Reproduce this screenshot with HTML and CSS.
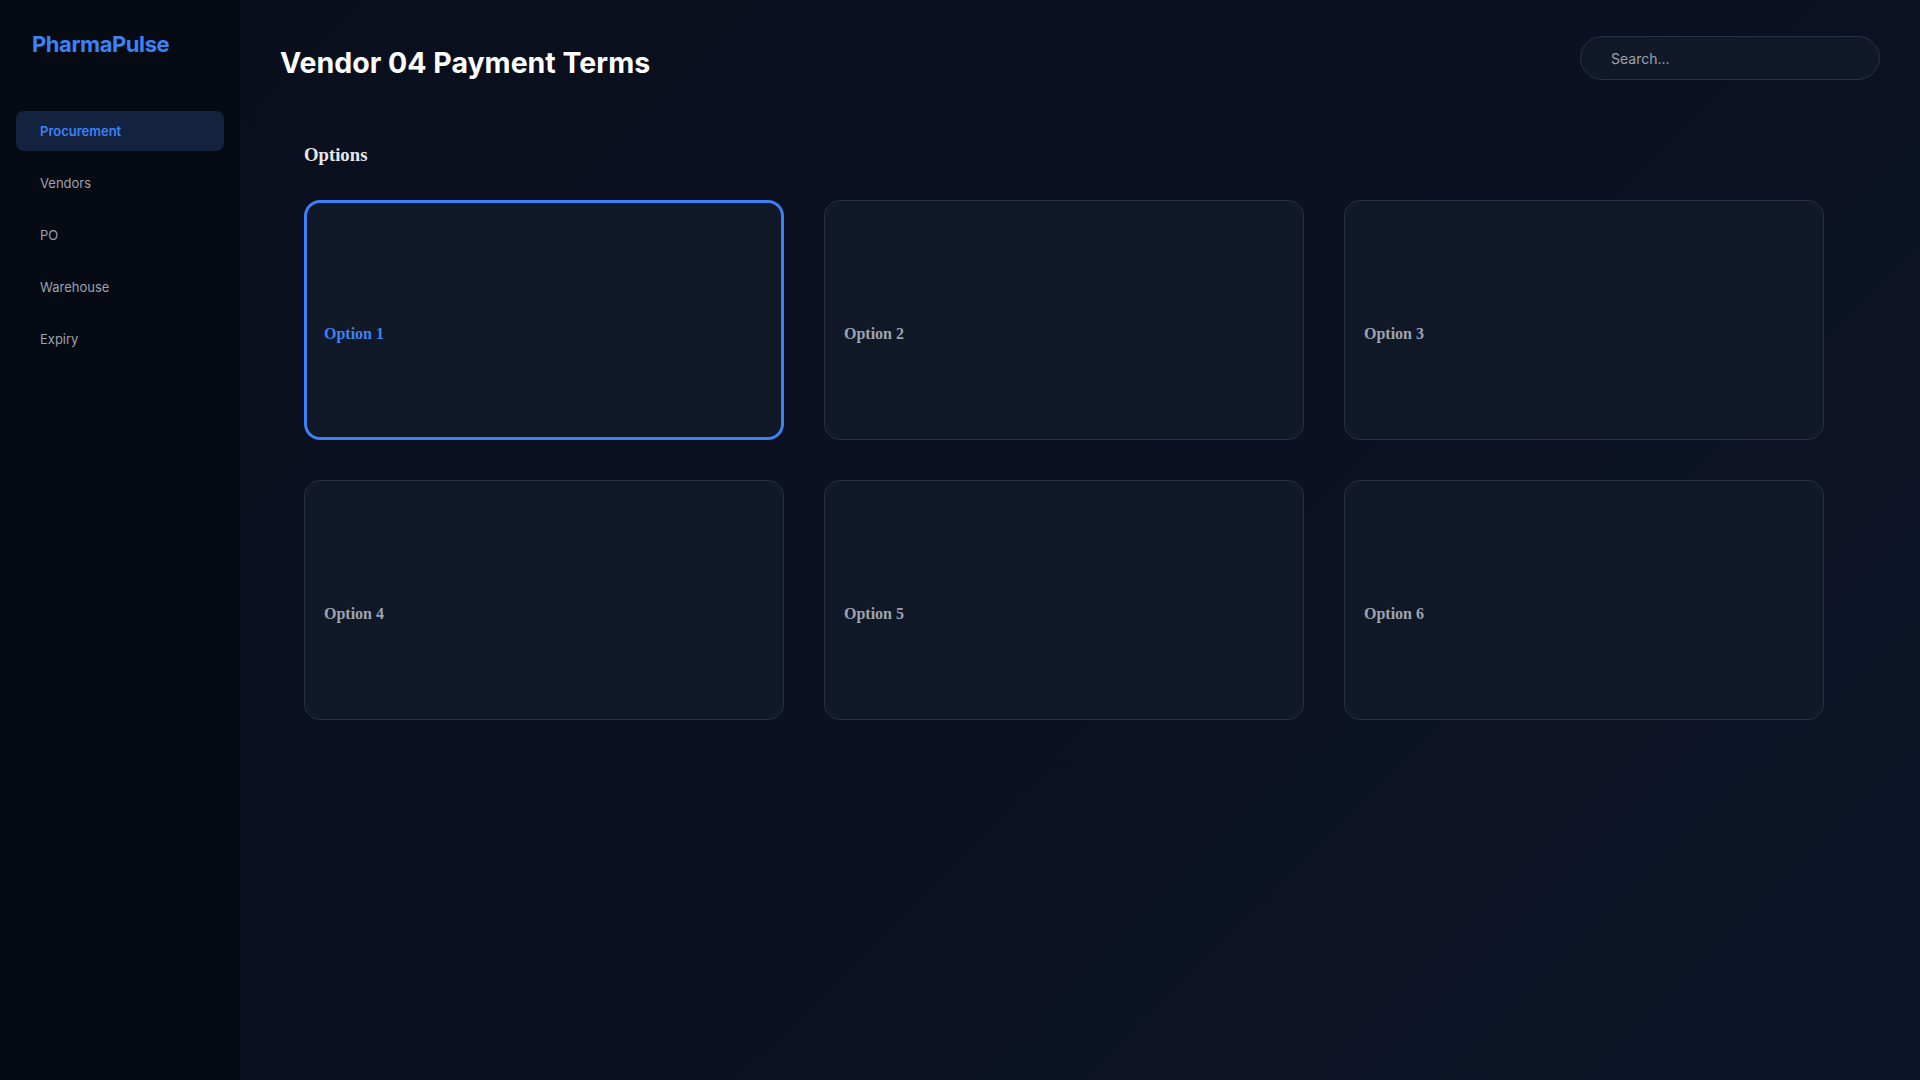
FILE: index.html
```html
<!DOCTYPE html>
<html lang="en">
    <head>
        <meta charset="UTF-8" />
        <meta name="viewport" content="width=device-width, initial-scale=1.0" />
        <link rel="stylesheet" href="styles.css">
        <title>Vendor 04 Payment Terms</title>
    </head>
    <body>
        <aside class="sidebar">
            <div class="logo">PharmaPulse</div>
            <nav class="nav">
                <a class="nav-item active" href="#">Procurement</a>
                <a class="nav-item" href="#">Vendors</a>
                <a class="nav-item" href="#">PO</a>
                <a class="nav-item" href="#">Warehouse</a>
                <a class="nav-item" href="#">Expiry</a>
            </nav>
        </aside>

        <main class="main">
            <header class="header">
                <h1 class="title">Vendor 04 Payment Terms</h1>
                <input class="search" type="text" placeholder="Search..." />
            </header>

            <section class="options">
                <h3>Options</h3>
                <div class="option-grid">
                    <div class="option selected"><h4>Option 1</h4></div>
                    <div class="option"><h4>Option 2</h4></div>
                    <div class="option"><h4>Option 3</h4></div>
                    <div class="option"><h4>Option 4</h4></div>
                    <div class="option"><h4>Option 5</h4></div>
                    <div class="option"><h4>Option 6</h4></div>
                </div>
            </section>
        </main>
    </body>
</html>
```

FILE: styles.css
```css
* {
    box-sizing: border-box;
}

body {
    margin: 0;
    min-height: 100vh;
    display: flex;
    background: #060a12;
    font-family: Inter, "Liberation Sans", sans-serif;
    color: #fff;
}

.sidebar {
    width: 240px;
    flex-shrink: 0;
    min-height: 100vh;
    padding: 28px 16px;
    background: #060a12;
}

.logo {
    padding: 0 16px;
    font-size: 22px;
    line-height: 32px;
    font-weight: 700;
    letter-spacing: -0.02em;
    color: #3b82f6;
}

.nav {
    margin-top: 51px;
    display: flex;
    flex-direction: column;
    gap: 12px;
}

.nav-item {
    display: block;
    height: 40px;
    line-height: 41px;
    padding: 0 24px;
    border-radius: 8px;
    font-size: 13px;
    color: #9ca3af;
    text-decoration: none;
}

.nav-item.active {
    background: #13223e;
    color: #3b82f6;
    font-weight: 600;
}

.main {
    flex: 1;
    min-height: 100vh;
    padding: 36px 40px;
    background: linear-gradient(135deg, #0a0f1d 0%, #0b1122 50%, #0d1427 100%);
}

.header {
    display: flex;
    justify-content: space-between;
    align-items: center;
    height: 44px;
    margin-bottom: 40px;
}

.title {
    margin: 0;
    padding-top: 8px;
    font-size: 28.5px;
    font-weight: 700;
    color: #fff;
}

.search {
    width: 300px;
    height: 44px;
    padding: 0 30px;
    border: 1px solid #273142;
    border-radius: 22px;
    background: #111827;
    font-family: Inter, "Liberation Sans", sans-serif;
    font-size: 14px;
    color: #e5e7eb;
    outline: none;
}

.search::placeholder {
    color: #9ca3af;
}

.options {
    padding: 24px;
    font-family: "Liberation Serif", serif;
}

.options h3 {
    margin: 0 0 34px;
    font-size: 1.17em;
    color: #e5e7eb;
}

.option-grid {
    display: grid;
    grid-template-columns: repeat(3, 480px);
    grid-auto-rows: 240px;
    gap: 40px;
}

.option {
    display: flex;
    align-items: center;
    padding: 48px 19px 20px;
    border: 1px solid #273142;
    border-radius: 16px;
    background: #111827;
    cursor: pointer;
}

.option h4 {
    margin: 0;
    font-size: 16px;
    color: #9ca3af;
}

.option.selected {
    border: 3px solid #3b82f6;
    padding: 46px 17px 18px;
}

.option.selected h4 {
    color: #3b82f6;
}
```
